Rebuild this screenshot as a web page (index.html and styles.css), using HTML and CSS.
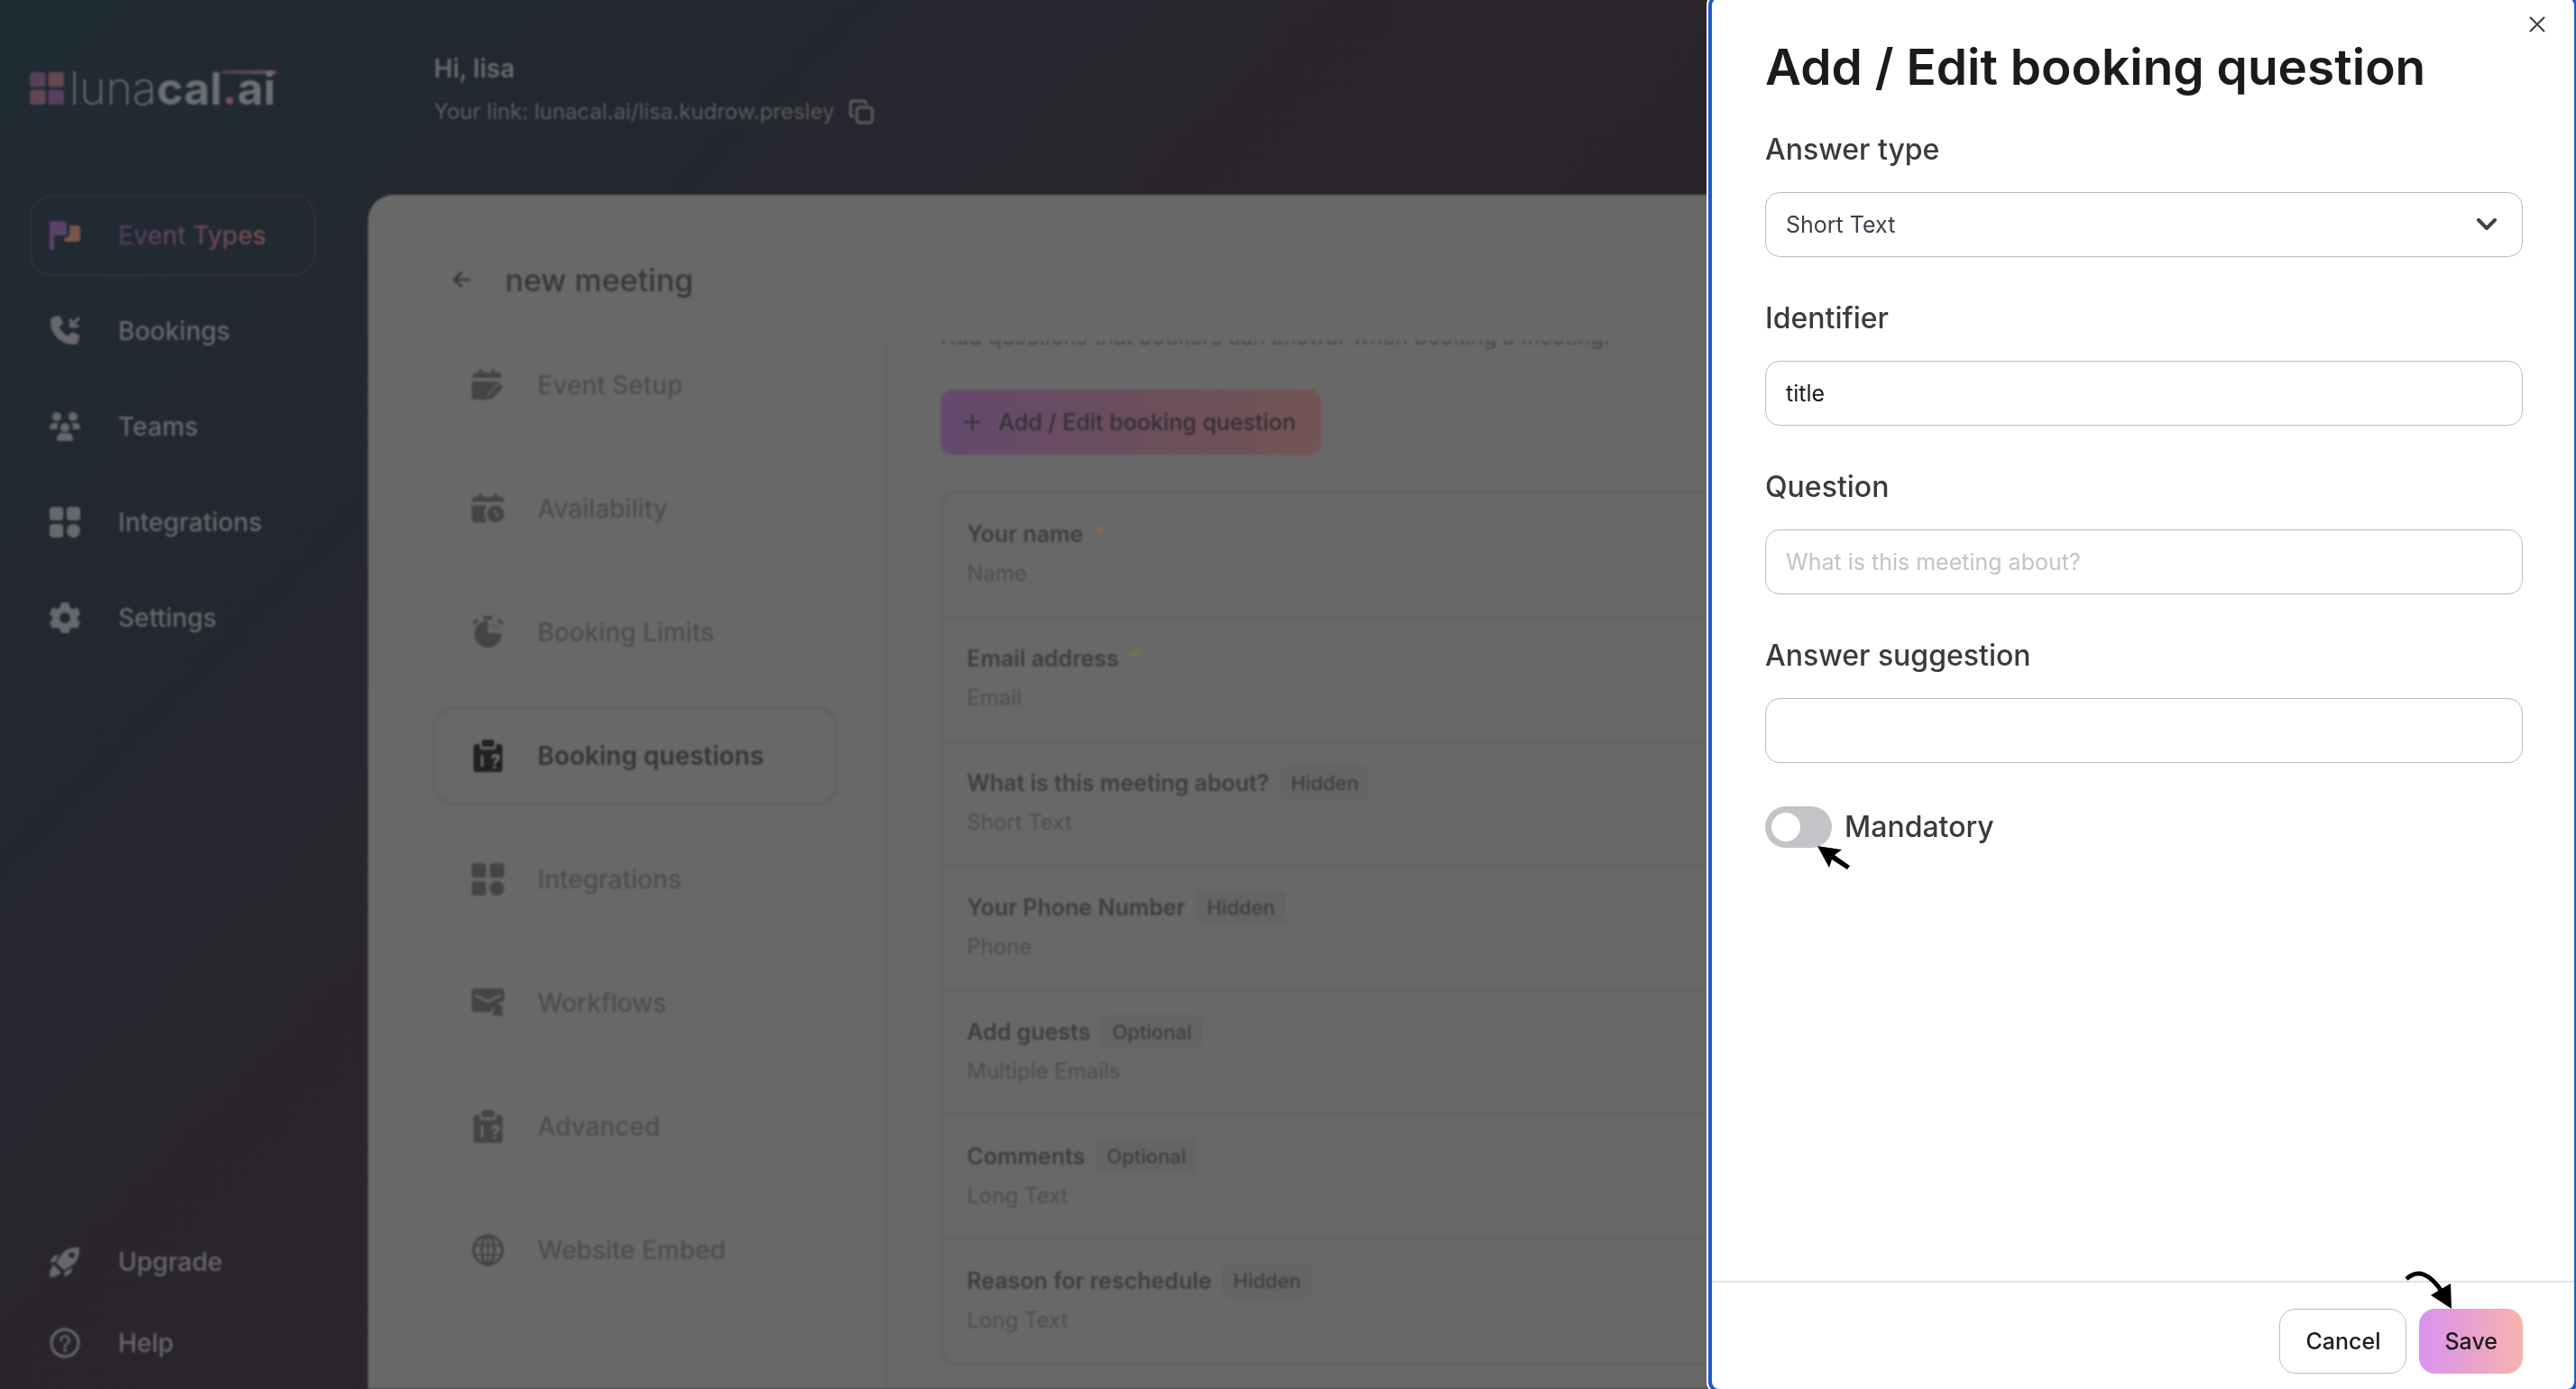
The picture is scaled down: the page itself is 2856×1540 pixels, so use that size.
FILE: index.html
```html
<!DOCTYPE html>
<html lang="en">
<head>
<meta charset="utf-8">
<title>Event types – lunacal.ai</title>
<link rel="stylesheet" href="styles.css">
</head>
<body>
<svg class="sprite" aria-hidden="true">
  <symbol id="i-grid" viewBox="0 0 36 36"><rect x="0" y="0" width="16" height="16" rx="4"/><rect x="20" y="0" width="16" height="16" rx="4"/><rect x="0" y="20" width="16" height="16" rx="4"/><circle cx="28" cy="28" r="8"/></symbol>
  <symbol id="i-phone" viewBox="0 0 32 32"><path d="M5 1l4-1q1 0 2 1l3 6q0 1-1 2l-3 3q3 6 9 9l3-3q1-1 2-1l6 3q2 1 1 3l-1 4q-1 3-4 3Q16 31 8 23 0 15 1 5q0-3 4-4z"/><path d="M30 3l-8 8m0-7v7h7" fill="none" stroke="currentColor" stroke-width="3" stroke-linecap="round" stroke-linejoin="round"/></symbol>
  <symbol id="i-team" viewBox="0 0 34 32"><circle cx="8" cy="5" r="5"/><circle cx="26" cy="5" r="5"/><path d="M0 18q0-6 5-6h5q-3 3-1 7H2q-2 0-2-1zM34 18q0-6-5-6h-5q3 3 1 7h7q2 0 2-1z"/><circle cx="17" cy="17" r="5"/><path d="M8 30q0-7 6-7h6q6 0 6 7 0 2-2 2H10q-2 0-2-2z"/></symbol>
  <symbol id="i-gear" viewBox="0 0 32 32"><path fill-rule="evenodd" d="M12 0h8l1 5 3 2 5-2 3 7-3 3v3l3 3-3 6-5-1-3 2-1 4h-8l-1-4-3-2-5 1-3-6 3-3v-3l-3-3 3-7 5 2 3-2zM16 10.500a5.500 5.500 0 1 0 0 11 5.500 5.500 0 0 0 0-11z"/></symbol>
  <symbol id="i-rocket" viewBox="0 0 32 32"><path fill-rule="evenodd" d="M31 1Q18 0 12 9l-5 8 8 8 8-5Q32 14 31 1zM23 6a3 3 0 1 1 0 6 3 3 0 0 1 0-6z"/><path d="M10 8L4 10l-4 7 6-1zM24 22l-2 6-7 4 1-6zM4 19l8 8q-4 5-12 5 0-8 4-13z"/></symbol>
  <symbol id="i-help" viewBox="0 0 34 34"><circle cx="17" cy="17" r="15" fill="none" stroke="currentColor" stroke-width="3"/><path d="M12.500 14a4.500 4.500 0 1 1 6.500 4q-2 1-2 3" fill="none" stroke="currentColor" stroke-width="2.500" stroke-linecap="round"/><circle cx="17" cy="25" r="2"/></symbol>
  <symbol id="i-clip" viewBox="0 0 32 36"><path fill-rule="evenodd" d="M3 5h4v4q0 2 2 2h14q2 0 2-2V5h4q3 0 3 3v25q0 3-3 3H3q-3 0-3-3V8q0-3 3-3zM8 17v13h3V17zM20 21h3v-2h2v3l-3 3v2h3v-1l4-4v-3q0-3-3-3h-3q-3 0-3 4zM22 29v3h3v-3z"/><rect x="9" y="0" width="14" height="8" rx="3"/></symbol>
  <symbol id="i-edit" viewBox="0 0 36 36"><path d="M1 10q0-6 5-6h2V1q2-2 4 0v3h10V1q2-2 4 0v3h3q4 0 4 6zM0 14h33l-3 1-12 13v6H4q-4 0-4-4zM31 16l4 4-12 13-5 1 1-5z"/></symbol>
  <symbol id="i-avail" viewBox="0 0 38 36"><path d="M0 10q0-6 5-6h3V1q2-2 4 0v3h14V1q2-2 4 0v3h3q5 0 5 6zM0 14h17q-5 10 1 20H4q-4 0-4-4z"/><path fill-rule="evenodd" d="M28 14a10 10 0 1 1 0 20 10 10 0 0 1 0-20zm-1 5v6l4 3 1-2-3-2v-5z"/></symbol>
  <symbol id="i-timer" viewBox="0 0 34 36"><path d="M12 0h10v4H12zM0 7l4-4 3 2-5 5zM34 7l-4-4-3 2 5 5z"/><path d="M17 6v13h15A15 15 0 1 1 17 5z"/><path d="M20 6q10 2 11 10H20z" opacity=".25"/></symbol>
  <symbol id="i-mail" viewBox="0 0 36 32"><path fill-rule="evenodd" d="M4 0h28q4 0 4 4v11q-5-2-10 3-4 3-4 8H4q-4 0-4-4V4q0-4 4-4zM4 6v3l14 7 14-7V6l-14 7z"/><path d="M24 28v-5q0-6 5-6t5 6v5l2 2H22z"/></symbol>
  <symbol id="i-globe" viewBox="0 0 36 36"><g fill="none" stroke="currentColor" stroke-width="3"><circle cx="18" cy="18" r="16"/><ellipse cx="18" cy="18" rx="7" ry="16"/><path d="M3 13h30M3 23h30M18 2v32" stroke-width="2"/></g></symbol>
</svg>

<div class="app">
  <aside class="sidebar">
    <div class="logo">
      <svg class="logo-mark" viewBox="0 0 37 35"><rect width="17" height="16" rx="3" fill="#574059"/><rect x="20" width="17" height="16" rx="3" fill="#64484f"/><rect y="19" width="17" height="16" rx="3" fill="#634554"/><rect x="20" y="19" width="17" height="16" rx="3" fill="#56405f"/></svg>
      <span class="logo-text">luna<b>cal<span class="logo-ai"><i>.</i>ai</span></b></span>
    </div>
    <nav class="nav">
      <a class="nav-item active" href="#"><svg viewBox="0 0 34 32"><path d="M0 0h15q4 0 4 4v12H5v16H0z" fill="#584269"/><path d="M22 5h8q4 0 4 4v12q0 2-2 2H18q-2 0-2-4l6-2z" fill="#7a5548"/></svg><span class="grad">Event Types</span></a>
      <a class="nav-item" href="#"><svg><use href="#i-phone"/></svg>Bookings</a>
      <a class="nav-item" href="#"><svg><use href="#i-team"/></svg>Teams</a>
      <a class="nav-item" href="#"><svg><use href="#i-grid"/></svg>Integrations</a>
      <a class="nav-item" href="#"><svg><use href="#i-gear"/></svg>Settings</a>
    </nav>
    <nav class="nav nav-foot">
      <a class="nav-item" href="#"><svg><use href="#i-rocket"/></svg>Upgrade</a>
      <a class="nav-item" href="#"><svg><use href="#i-help"/></svg>Help</a>
    </nav>
  </aside>
  <div class="content">
    <header class="greeting">
      <p class="hi">Hi, lisa</p>
      <p class="link">Your link: lunacal.ai/lisa.kudrow.presley
        <button class="copy" aria-label="Copy link"><svg viewBox="0 0 28 28"><g fill="none" stroke="currentColor" stroke-width="3"><rect x="9" y="9" width="17" height="17" rx="3"/><path d="M6 19H4q-2 0-2-2V4q0-2 2-2h13q2 0 2 2v2"/></g></svg></button></p>
    </header>
    <main class="panel">
      <div class="panel-head">
        <a class="back" href="#" aria-label="Back"><svg viewBox="0 0 22 22"><path d="M21 11H2m9-9l-9 9 9 9" fill="none" stroke="currentColor" stroke-width="3"/></svg></a>
        <h2>new meeting</h2>
      </div>
      <div class="panel-body">
        <nav class="subnav">
          <a href="#"><svg><use href="#i-edit"/></svg>Event Setup</a>
          <a href="#"><svg><use href="#i-avail"/></svg>Availability</a>
          <a href="#"><svg><use href="#i-timer"/></svg>Booking Limits</a>
          <a class="active" href="#"><svg><use href="#i-clip"/></svg>Booking questions</a>
          <a href="#"><svg><use href="#i-grid"/></svg>Integrations</a>
          <a href="#"><svg><use href="#i-mail"/></svg>Workflows</a>
          <a href="#"><svg><use href="#i-clip"/></svg>Advanced</a>
          <a href="#"><svg><use href="#i-globe"/></svg>Website Embed</a>
        </nav>
        <section class="questions">
          <p class="desc">Add questions that bookers can answer when booking a meeting.</p>
          <button class="add"><svg viewBox="0 0 18 18"><path d="M9 0v18M0 9h18" stroke="currentColor" stroke-width="2"/></svg>Add / Edit booking question</button>
          <ul class="list">
            <li><h3>Your name <em>*</em></h3><p>Name</p></li>
            <li><h3>Email address <em>*</em></h3><p>Email</p></li>
            <li><h3>What is this meeting about? <span class="badge">Hidden</span></h3><p>Short Text</p></li>
            <li><h3>Your Phone Number <span class="badge">Hidden</span></h3><p>Phone</p></li>
            <li><h3>Add guests <span class="badge">Optional</span></h3><p>Multiple Emails</p></li>
            <li><h3>Comments <span class="badge">Optional</span></h3><p>Long Text</p></li>
            <li><h3>Reason for reschedule <span class="badge">Hidden</span></h3><p>Long Text</p></li>
          </ul>
        </section>
      </div>
    </main>
  </div>
</div>

<form class="drawer" role="dialog" aria-labelledby="drawer-title">
  <button type="button" class="close" aria-label="Close"><svg viewBox="0 0 18 18"><path d="M1 1l16 16M17 1L1 17" stroke="currentColor" stroke-width="2"/></svg></button>
  <div class="fields">
    <h1 id="drawer-title">Add / Edit booking question</h1>
    <div class="field">
      <label for="type">Answer type</label>
      <div class="select"><select id="type"><option>Short Text</option></select><svg viewBox="0 0 22 14"><path d="M2 2l9 9 9-9" fill="none" stroke="currentColor" stroke-width="4" stroke-linecap="round" stroke-linejoin="round"/></svg></div>
    </div>
    <div class="field"><label for="ident">Identifier</label><input id="ident" type="text" value="title"></div>
    <div class="field"><label for="question">Question</label><input id="question" type="text" placeholder="What is this meeting about?"></div>
    <div class="field"><label for="suggestion">Answer suggestion</label><input id="suggestion" type="text"></div>
    <div class="toggle"><input id="mandatory" type="checkbox" role="switch"><label for="mandatory">Mandatory</label>
      <svg class="pointer" viewBox="0 0 36 28"><path d="M0 0l27 4-8 6 17 12-3 4-17-11-3 9z"/></svg></div>
  </div>
  <footer class="actions">
    <button type="button" class="btn">Cancel</button>
    <button type="submit" class="btn save">Save</button>
    <svg class="hint" viewBox="0 0 54 44"><path d="M2 10Q21-7 42 25" fill="none" stroke="#000" stroke-width="5"/><path d="M52 43l-1-28-22 13z"/></svg>
  </footer>
</form>
</body>
</html>
```
FILE: styles.css
```css
* { box-sizing: border-box; margin: 0; padding: 0; }
html, body { height: 100%; overflow: hidden; }
body { font-family: Inter, "Liberation Sans", sans-serif; background: #28262e; }
a { color: inherit; text-decoration: none; }
button, input, select { font: inherit; color: inherit; background: none; border: 0; }
svg { display: block; fill: currentColor; flex: none; }
.sprite { position: absolute; width: 0; height: 0; }

.app {
  display: flex;
  height: 100vh;
  background: linear-gradient(135deg, #1f2c34 0%, #222931 12%, #25272f 22%, #2a252d 34%, #2b252a 50%, #2e282e 100%);
}
.app > * { filter: blur(1px); }

.sidebar { flex: none; width: 408px; padding: 76px 58px 6px 33px; display: flex; flex-direction: column; }
.logo { display: flex; align-items: center; gap: 6px; height: 44px; margin-bottom: 96px; color: #6b6e72; }
.logo-mark { width: 38px; height: 36px; }
.logo-text { font-size: 50px; line-height: 44px; font-weight: 200; }
.logo-text b { font-weight: 700; }
.logo-text i { font-style: normal; color: #7a4f5f; }
.logo-ai { background: linear-gradient(90deg, #4a3d5a, #75504f) 0 10px / 100% 4px no-repeat; }
.nav { display: flex; flex-direction: column; gap: 16px; }
.nav-foot { margin-top: auto; gap: 0; }
.nav-item { display: flex; align-items: center; gap: 42px; height: 90px; padding-left: 20px; border: 2px solid transparent; border-radius: 24px; color: #66686b; font-size: 28px; font-weight: 500; }
.nav-item svg { width: 34px; height: 34px; }
.nav-item.active { border-color: #30333d; }
.grad { background: linear-gradient(90deg, #4d3f60, #75504f); background-clip: text; color: transparent; }

.content { flex: 1; min-width: 0; display: flex; flex-direction: column; }
.greeting { height: 216px; padding: 54px 0 0 73px; color: #68696c; }
.hi { font-size: 28px; line-height: 44px; font-weight: 600; }
.link { display: flex; align-items: center; gap: 16px; margin-top: 4px; font-size: 24px; line-height: 44px; color: #5c5d61; }
.copy svg { width: 28px; height: 28px; }

.panel { flex: 1; min-height: 0; display: flex; flex-direction: column; background: #686868; border-radius: 28px 0 0 0; color: #484848; }
.panel-head { display: flex; align-items: center; gap: 38px; height: 162px; padding: 26px 0 0 94px; }
.panel-head svg { width: 20px; height: 22px; color: #383838; }
.panel-head h2 { font-size: 34px; font-weight: 500; color: #383838; }
.panel-body { flex: 1; min-height: 0; display: flex; overflow: hidden; }
.subnav { flex: none; width: 577px; margin-top: -6px; padding-left: 71px; border-right: 4px solid #636363; display: flex; flex-direction: column; gap: 27px; }
.subnav a { flex: none; display: flex; align-items: center; gap: 37px; width: 450px; height: 110px; padding-left: 40px; border: 4px solid transparent; border-radius: 24px; font-size: 28px; font-weight: 500; color: #4e4e4e; }
.subnav svg { width: 36px; height: 36px; color: #444; }
.subnav .active { border-color: #646363; color: #363636; font-weight: 600; }
.subnav .active svg { color: #222; }

.questions { flex: 1; min-width: 0; padding-left: 58px; }
.desc { margin: -22px 0 40px; font-size: 24px; line-height: 36px; }
.add { display: flex; align-items: center; gap: 20px; height: 72px; padding: 0 28px 0 26px; margin-bottom: 40px; border-radius: 14px; background: linear-gradient(90deg, #644a6c, #6b4f5c 55%, #735553); color: #332f35; font-size: 25px; font-weight: 500; }
.add svg { width: 18px; height: 18px; }
.list { list-style: none; border: 4px solid #646464; border-radius: 16px; }
.list li { height: 138px; padding: 22px 25px; border-bottom: 4px solid #646464; }
.list li:last-child { height: 134px; border-bottom: 0; }
.list h3 { display: flex; align-items: center; gap: 12px; height: 44px; font-size: 25px; font-weight: 600; color: #3b3f42; }
.list em { font-style: normal; color: #80713c; }
.list p { font-size: 24px; line-height: 44px; color: #4e4e4e; }
.badge { padding: 0 12px; border-radius: 8px; background: #646465; font-size: 22px; line-height: 38px; font-weight: 500; color: #3b3f42; }

.drawer { position: fixed; top: -2px; right: 2px; bottom: 0; width: 956px; display: flex; flex-direction: column; background: #fff; outline: 4px solid #1c5cc8; box-shadow: 0 0 0 6px #fff; border-radius: 8px; color: #3b3b3b; }
.close { position: absolute; top: 20px; right: 32px; }
.close svg { width: 18px; height: 18px; }
.fields { flex: 1; padding: 40px 57px 0 59px; }
.fields h1 { font-size: 55px; line-height: 72px; font-weight: 600; color: #1b1b1b; }
.field { margin-bottom: 48px; }
.field:first-of-type { margin-top: 36px; }
.field label, .toggle label { display: block; font-size: 32px; line-height: 40px; font-weight: 500; }
.field input, .select { width: 100%; height: 72px; margin-top: 27px; border: 1px solid #bdbdc0; border-radius: 16px; font-size: 25px; }
.field input { padding: 0 22px; color: #1b1b1b; }
.field input::placeholder { color: #c3c3c8; opacity: 1; }
.select { display: grid; grid-template-columns: 1fr auto; align-items: center; padding-right: 28px; color: #3e414c; }
.select select { grid-area: 1 / 1 / 2 / 3; height: 68px; padding-left: 22px; appearance: none; }
.select svg { grid-area: 1 / 2; width: 22px; height: 14px; pointer-events: none; }
.toggle { position: relative; display: flex; align-items: center; gap: 14px; }
.toggle input { appearance: none; width: 74px; height: 46px; padding: 7px; border-radius: 23px; background: #c3c3c8; }
.toggle input::before { content: ""; display: block; width: 32px; height: 32px; border-radius: 50%; background: #fff; }
.pointer { position: absolute; left: 58px; top: 44px; width: 36px; height: 28px; color: #000; }
.actions { position: relative; display: flex; justify-content: flex-end; gap: 14px; padding: 29px 57px 17px; border-top: 2px solid #e2e2e5; }
.btn { height: 72px; padding: 0 28px; border: 1px solid #bdbdc0; border-radius: 18px; color: #1b1b1b; font-size: 25px; font-weight: 500; }
.save { border: 0; background: linear-gradient(90deg, #db92f0, #e6a0d2 45%, #f8b4ac); }
.hint { position: absolute; right: 134px; top: -14px; width: 54px; height: 44px; color: #000; }
```
